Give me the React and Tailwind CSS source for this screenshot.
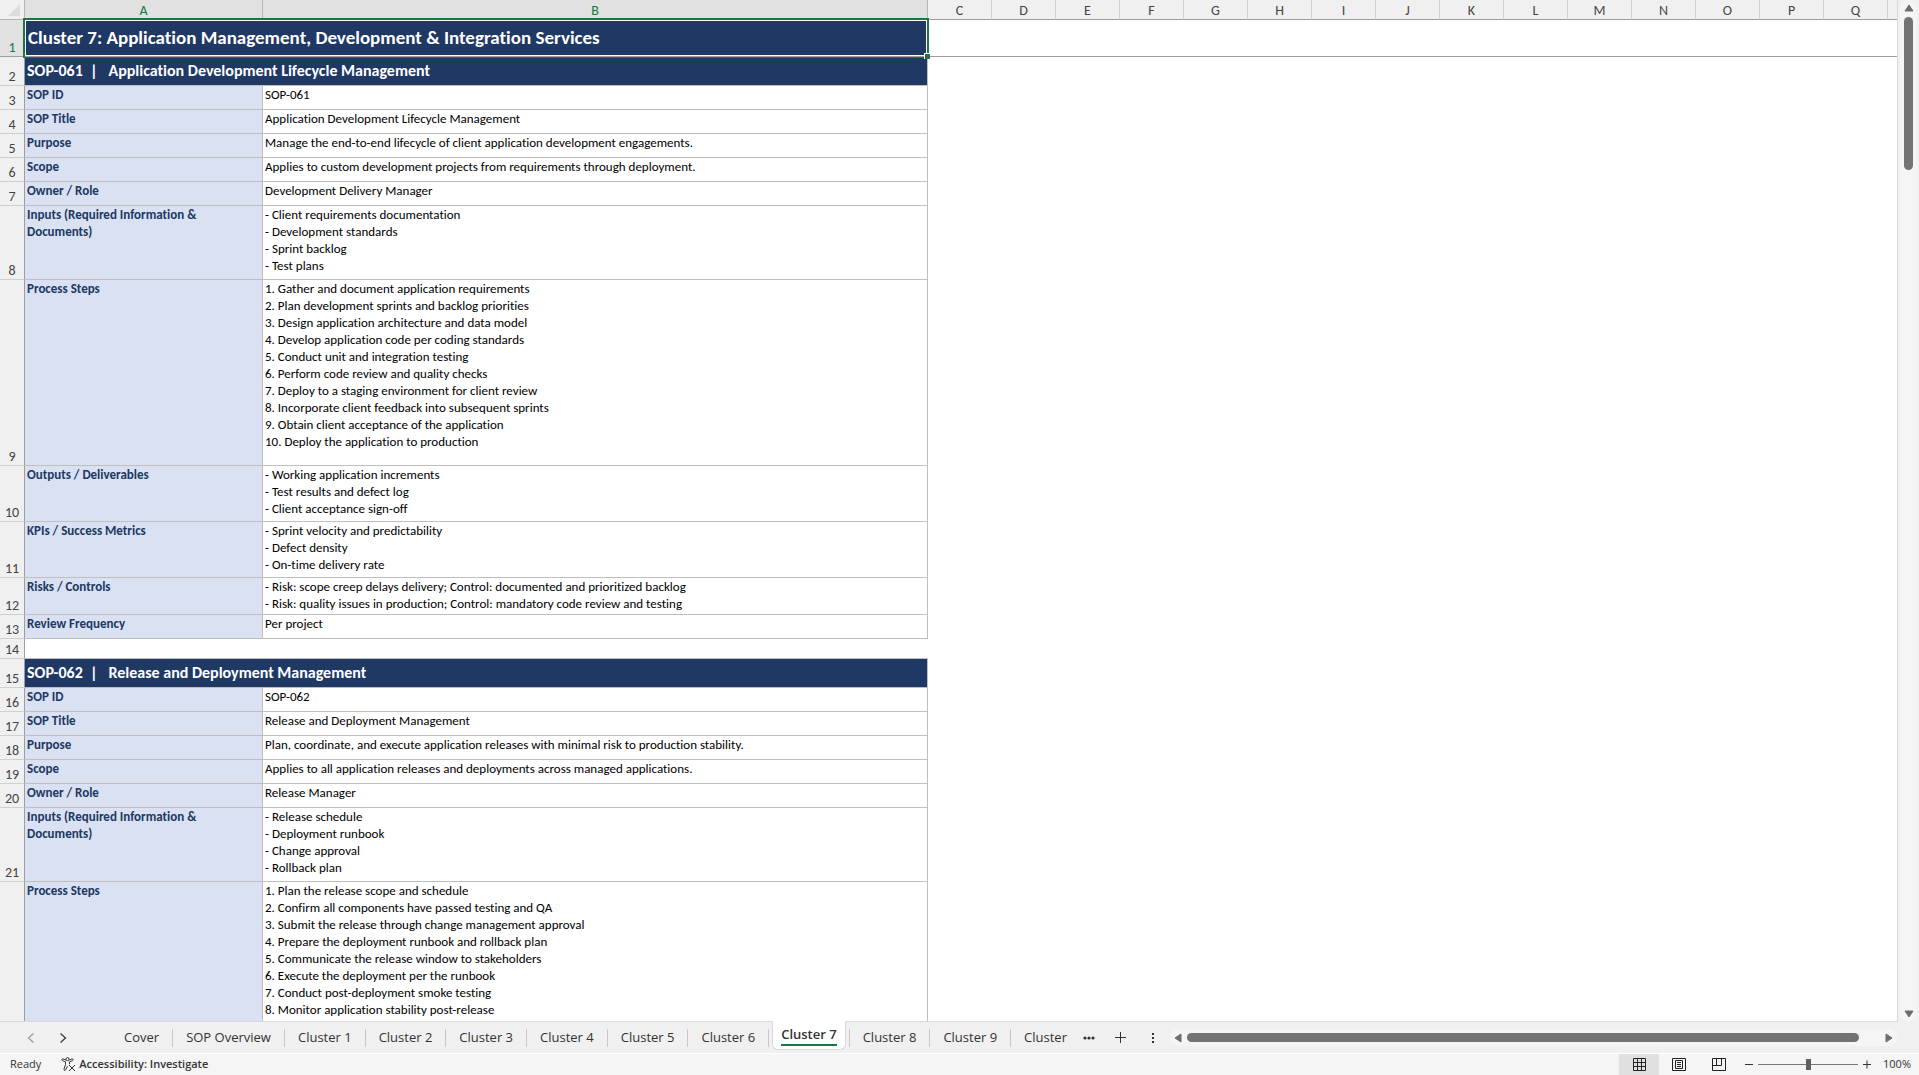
import { Fragment, useState } from "react";

const letters = ["C", "D", "E", "F", "G", "H", "I", "J", "K", "L", "M", "N", "O", "P", "Q"];

const sheetTabs = [
  "Cover",
  "SOP Overview",
  "Cluster 1",
  "Cluster 2",
  "Cluster 3",
  "Cluster 4",
  "Cluster 5",
  "Cluster 6",
  "Cluster 7",
  "Cluster 8",
  "Cluster 9",
];

/* Sheet rows, from row 2 down */
const rows = [
  { type: "title", h: "h-[29px]", label: "SOP-061  |   Application Development Lifecycle Management" },
  { h: "h-6", label: "SOP ID", lines: ["SOP-061"] },
  { h: "h-6", label: "SOP Title", lines: ["Application Development Lifecycle Management"] },
  { h: "h-6", label: "Purpose", lines: ["Manage the end-to-end lifecycle of client application development engagements."] },
  { h: "h-6", label: "Scope", lines: ["Applies to custom development projects from requirements through deployment."] },
  { h: "h-6", label: "Owner / Role", lines: ["Development Delivery Manager"] },
  {
    h: "h-[74px]",
    label: "Inputs (Required Information & Documents)",
    lines: ["- Client requirements documentation", "- Development standards", "- Sprint backlog", "- Test plans"],
  },
  {
    h: "h-[186px]",
    label: "Process Steps",
    lines: [
      "1. Gather and document application requirements",
      "2. Plan development sprints and backlog priorities",
      "3. Design application architecture and data model",
      "4. Develop application code per coding standards",
      "5. Conduct unit and integration testing",
      "6. Perform code review and quality checks",
      "7. Deploy to a staging environment for client review",
      "8. Incorporate client feedback into subsequent sprints",
      "9. Obtain client acceptance of the application",
      "10. Deploy the application to production",
    ],
  },
  {
    h: "h-14",
    label: "Outputs / Deliverables",
    lines: ["- Working application increments", "- Test results and defect log", "- Client acceptance sign-off"],
  },
  {
    h: "h-14",
    label: "KPIs / Success Metrics",
    lines: ["- Sprint velocity and predictability", "- Defect density", "- On-time delivery rate"],
  },
  {
    h: "h-[37px]",
    label: "Risks / Controls",
    lines: [
      "- Risk: scope creep delays delivery; Control: documented and prioritized backlog",
      "- Risk: quality issues in production; Control: mandatory code review and testing",
    ],
  },
  { h: "h-6", label: "Review Frequency", lines: ["Per project"] },
  { type: "blank", h: "h-5" },
  { type: "title", h: "h-[29px]", label: "SOP-062  |   Release and Deployment Management" },
  { h: "h-6", label: "SOP ID", lines: ["SOP-062"] },
  { h: "h-6", label: "SOP Title", lines: ["Release and Deployment Management"] },
  { h: "h-6", label: "Purpose", lines: ["Plan, coordinate, and execute application releases with minimal risk to production stability."] },
  { h: "h-6", label: "Scope", lines: ["Applies to all application releases and deployments across managed applications."] },
  { h: "h-6", label: "Owner / Role", lines: ["Release Manager"] },
  {
    h: "h-[74px]",
    label: "Inputs (Required Information & Documents)",
    lines: ["- Release schedule", "- Deployment runbook", "- Change approval", "- Rollback plan"],
  },
  {
    h: "h-[186px]",
    label: "Process Steps",
    hideNumber: true,
    lines: [
      "1. Plan the release scope and schedule",
      "2. Confirm all components have passed testing and QA",
      "3. Submit the release through change management approval",
      "4. Prepare the deployment runbook and rollback plan",
      "5. Communicate the release window to stakeholders",
      "6. Execute the deployment per the runbook",
      "7. Conduct post-deployment smoke testing",
      "8. Monitor application stability post-release",
    ],
  },
];

function RowNumber({ n, active }) {
  return (
    <th
      scope="row"
      className={
        active
          ? "border-r border-b border-[#9e9e9e] bg-[#e1e1e1] p-0 align-bottom text-sm leading-4 font-normal text-[#107c41]"
          : "border-r border-b border-r-[#9e9e9e] border-b-[#d0d0d0] bg-[#f0f0f0] p-0 align-bottom text-sm leading-4 font-normal text-[#444]"
      }
    >
      {n}
    </th>
  );
}

function Row({ row, n }) {
  if (row.type === "title") {
    return (
      <tr className={row.h}>
        <RowNumber n={n} />
        <td
          colSpan={2}
          className="border-r border-b border-[#bfbfbf] bg-[#203864] px-0.5 py-0 text-base leading-5 font-bold whitespace-pre text-white"
        >
          {row.label}
        </td>
        <td colSpan={16} />
      </tr>
    );
  }
  if (row.type === "blank") {
    return (
      <tr className={row.h}>
        <RowNumber n={n} />
        <td colSpan={2} className="border-b border-[#bfbfbf] p-0" />
        <td colSpan={16} />
      </tr>
    );
  }
  return (
    <tr className={row.h}>
      <RowNumber n={row.hideNumber ? "" : n} />
      <td className="border-r border-b border-[#bfbfbf] bg-[#d9e1f2] px-0.5 py-0 align-top text-[13px] leading-[17px] font-bold text-[#203864]">
        {row.label}
      </td>
      <td className="border-r border-b border-[#bfbfbf] px-0.5 py-0 align-top text-[13px] leading-[17px] text-black">
        {row.lines.map((line, i) => (
          <Fragment key={i}>
            {i > 0 && <br />}
            {line}
          </Fragment>
        ))}
      </td>
      <td colSpan={16} />
    </tr>
  );
}

function Sheet() {
  return (
    <div className="min-h-0 flex-1 overflow-hidden border-r border-b border-[#d9d9d9] bg-white">
      <table className="w-full table-fixed border-separate border-spacing-0 font-['Carlito','Lato',sans-serif] [font-variant-ligatures:none]">
        <colgroup>
          <col className="w-[25px]" />
          <col className="w-[238px]" />
          <col className="w-[665px]" />
          {letters.map((l) => (
            <col key={l} className="w-16" />
          ))}
          <col />
        </colgroup>
        <thead>
          <tr className="h-5 bg-[#f0f0f0] text-sm leading-4 text-[#444]">
            <th className="border-r border-b border-[#b5b5b5] p-0">
              <svg className="mr-1 ml-auto block" width="12" height="12" viewBox="0 0 12 12">
                <path d="M12 0v12H0z" fill="#dcdcdc" />
              </svg>
            </th>
            <th className="border-r border-b border-[#b5b5b5] bg-[#e1e1e1] px-0 pt-0.5 pb-0 font-normal text-[#107c41]">A</th>
            <th className="border-r border-b border-[#b5b5b5] bg-[#e1e1e1] px-0 pt-0.5 pb-0 font-normal text-[#107c41]">B</th>
            {letters.map((l) => (
              <th key={l} className="border-r border-b border-r-[#d0d0d0] border-b-[#9e9e9e] px-0 pt-0.5 pb-0 font-normal">
                {l}
              </th>
            ))}
            <th className="border-b border-[#9e9e9e] p-0" />
          </tr>
        </thead>
        <tbody>
          <tr className="h-[37px]">
            <RowNumber n={1} active />
            <td
              colSpan={2}
              className="relative border-b border-[#9e9e9e] bg-[#203864] px-[3px] py-0 text-[19px] leading-6 font-bold text-white"
            >
              Cluster 7: Application Management, Development &amp; Integration Services
              {/* Selection frame, freeze line and fill handle */}
              <div className="absolute -top-0.5 -right-px -bottom-0.5 -left-0.5 border-2 border-[#217346]">
                <div className="h-full border border-white" />
              </div>
              <div className="absolute inset-x-0 -bottom-px h-px bg-[#9e9e9e]" />
              <div className="absolute -right-0.5 -bottom-[3px] size-1.5 border-t border-l border-white bg-[#217346]" />
            </td>
            <td colSpan={16} className="border-b border-[#9e9e9e] p-0" />
          </tr>
          {rows.map((row, i) => (
            <Row key={i} row={row} n={i + 2} />
          ))}
        </tbody>
      </table>
    </div>
  );
}

function VerticalScroll() {
  return (
    <div className="mr-0.5 ml-0.5 flex w-[17px] shrink-0 flex-col items-center rounded-full bg-[#f5f5f5] pt-1 pb-1">
      <button aria-label="Scroll up">
        <svg className="block" width="10" height="8" viewBox="0 0 10 8">
          <path d="M5 1l4 6H1z" fill="#6e6e6e" stroke="#6e6e6e" strokeLinejoin="round" />
        </svg>
      </button>
      <div className="mt-[5px] h-[153px] w-[9px] rounded-full bg-[#737373]" />
      <button aria-label="Scroll down" className="mt-auto">
        <svg className="block" width="10" height="8" viewBox="0 0 10 8">
          <path d="M5 7l4-6H1z" fill="#6e6e6e" stroke="#6e6e6e" strokeLinejoin="round" />
        </svg>
      </button>
    </div>
  );
}

function HorizontalScroll() {
  return (
    <div className="ml-4 flex h-[17px] flex-1 items-center rounded-full bg-[#f5f5f5] px-1">
      <button aria-label="Scroll left">
        <svg className="block" width="8" height="10" viewBox="0 0 8 10">
          <path d="M1 5l6-4v8z" fill="#6e6e6e" stroke="#6e6e6e" strokeLinejoin="round" />
        </svg>
      </button>
      <div className="mr-[26px] ml-[5px] h-[9px] flex-1 rounded-full bg-[#737373]" />
      <button aria-label="Scroll right">
        <svg className="block" width="8" height="10" viewBox="0 0 8 10">
          <path d="M7 5L1 1v8z" fill="#6e6e6e" stroke="#6e6e6e" strokeLinejoin="round" />
        </svg>
      </button>
    </div>
  );
}

function TabBar() {
  return (
    <div className="flex h-[31px] shrink-0 items-center bg-[#f0f0f0] pr-[22px] text-[#333]">
      <button aria-label="Previous sheets" className="ml-[27px]">
        <svg className="block" width="8" height="10" viewBox="0 0 8 10" fill="none" stroke="#999" strokeWidth="1.2">
          <path d="M6.500.5L1.500 5l5 4.500" />
        </svg>
      </button>
      <button aria-label="Next sheets" className="ml-6">
        <svg className="block" width="8" height="10" viewBox="0 0 8 10" fill="none" stroke="#333" strokeWidth="1.2">
          <path d="M1.500.5l5 4.500-5 4.500" />
        </svg>
      </button>
      <div className="ml-11 flex h-[31px] items-center font-['Open_Sans','Noto_Sans',sans-serif] text-[13px]">
        {sheetTabs.map((tab) =>
          tab === "Cluster 7" ? (
            <div key={tab} className="flex h-[18px] items-center border-r border-[#c8c8c8] px-[3px]">
              <button className="-mt-1 h-[29px] rounded-b-md border border-t-0 border-[#d9d9d9] bg-white px-2 pb-px font-semibold">
                <span className="block border-b-2 border-[#107c41] leading-5">{tab}</span>
              </button>
            </div>
          ) : (
            <button key={tab} className="h-[18px] border-r border-[#c8c8c8] px-[13px] pb-0.5 leading-4">
              {tab}
            </button>
          )
        )}
        <button className="ml-[13px] h-[18px] w-[47px] overflow-hidden pb-0.5 text-left leading-4 whitespace-nowrap">
          Cluster 10
        </button>
      </div>
      <button aria-label="More sheets" className="ml-3">
        <svg className="block" width="12" height="4" viewBox="0 0 12 4" fill="#333">
          <circle cx="2" cy="2" r="1.600" />
          <circle cx="6" cy="2" r="1.600" />
          <circle cx="10" cy="2" r="1.600" />
        </svg>
      </button>
      <button aria-label="New sheet" className="ml-5">
        <svg className="block" width="11" height="11" viewBox="0 0 11 11" stroke="#333">
          <path d="M5.500 0v11M0 5.500h11" />
        </svg>
      </button>
      <div className="ml-[26px]">
        <svg className="block" width="2" height="12" viewBox="0 0 2 12" fill="#333">
          <path d="M0 1h2v2H0zM0 5h2v2H0zM0 9h2v2H0z" />
        </svg>
      </div>
      <HorizontalScroll />
    </div>
  );
}

function StatusBar() {
  const [zoom, setZoom] = useState(100);

  return (
    <div className="flex h-[22px] shrink-0 items-center border-t border-white bg-[#f5f5f5] pr-2 pl-2.5 font-['Open_Sans','Noto_Sans',sans-serif] text-[11px] text-[#333]">
      <span>Ready</span>
      <button className="ml-5 flex items-center gap-[3px] font-semibold">
        <svg width="15" height="15" viewBox="0 0 15 15" fill="none" stroke="#333" strokeWidth="1">
          <circle cx="6.500" cy="2.200" r="1.600" />
          <path d="M4.800 3L2 1.900C.8 1.600.4 3.100 1.500 3.600L4.500 4.900v2.600L3 12.200c-.3 1.300 1.100 1.700 1.600.7L6.500 9.200M8.200 3L11 1.900c1.200-.3 1.600 1.200.5 1.700L8.500 4.900v2.300" />
          <path d="M8 8l6 6M14 8l-6 6" />
        </svg>
        Accessibility: Investigate
      </button>
      <div className="ml-auto flex h-full items-center">
        <button aria-label="Normal view" className="flex h-full w-10 items-center justify-center bg-[#e0e0e0]">
          <svg width="13" height="13" viewBox="0 0 13 13" fill="none" stroke="#222">
            <path d="M.5.5h12v12H.5zM4.500.5v12M8.500.5v12M.5 4.500h12M.5 8.500h12" />
          </svg>
        </button>
        <button aria-label="Page layout view" className="flex h-full w-10 items-center justify-center">
          <svg width="14" height="13" viewBox="0 0 14 13" fill="none" stroke="#222">
            <path d="M.5.5h13v12H.5zM3.500 2.500h7v8h-7zM5 4.500h4M5 6.500h4M5 8.500h4" />
          </svg>
        </button>
        <button aria-label="Page break preview" className="flex h-full w-10 items-center justify-center">
          <svg width="14" height="13" viewBox="0 0 14 13" fill="none" stroke="#222">
            <path d="M.5.5h13v12H.5zM4.500.5v7M9.500.5v7M.5 7.500h9" />
          </svg>
        </button>
        <button aria-label="Zoom out" className="ml-1.5">
          <svg className="block" width="8" height="9" viewBox="0 0 8 9" stroke="#333">
            <path d="M0 4.500h8" />
          </svg>
        </button>
        <input
          type="range"
          aria-label="Zoom"
          min="0"
          max="200"
          value={zoom}
          onChange={(event) => setZoom(Number(event.target.value))}
          className="mx-[5px] h-3 w-[100px] appearance-none bg-[linear-gradient(#777,#777)] bg-[length:100%_1px] bg-center bg-no-repeat [&::-webkit-slider-thumb]:h-[11px] [&::-webkit-slider-thumb]:w-[5px] [&::-webkit-slider-thumb]:appearance-none [&::-webkit-slider-thumb]:bg-[#606060]"
        />
        <button aria-label="Zoom in">
          <svg className="block" width="8" height="9" viewBox="0 0 8 9" stroke="#333">
            <path d="M0 4.500h8M4 .5v8" />
          </svg>
        </button>
        <button className="ml-3 w-7 text-right">{zoom}%</button>
      </div>
    </div>
  );
}

export default function App() {
  return (
    <div className="flex h-screen flex-col overflow-hidden bg-[#f0f0f0]">
      <div className="flex min-h-0 flex-1">
        <Sheet />
        <VerticalScroll />
      </div>
      <TabBar />
      <StatusBar />
    </div>
  );
}
